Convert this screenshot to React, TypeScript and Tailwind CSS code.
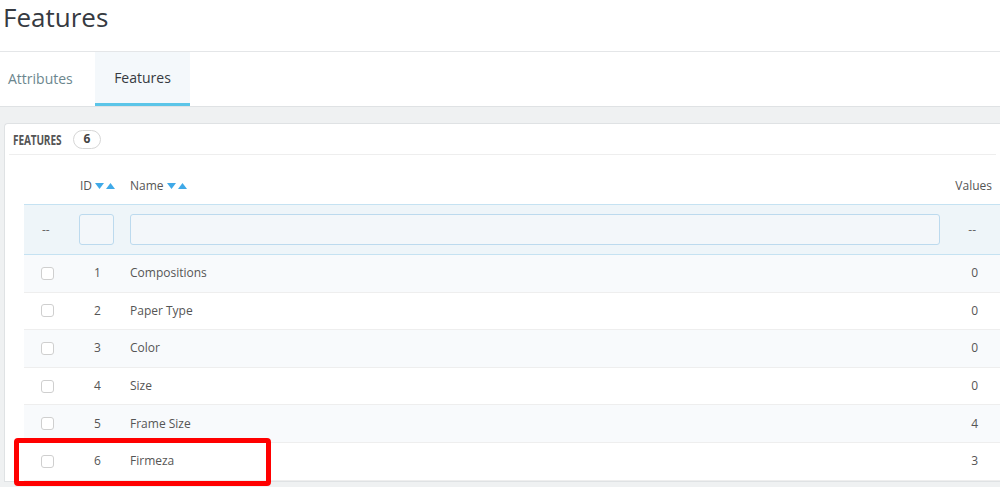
import React from "react";

const rows = [
  { id: 1, name: "Compositions", values: 0 },
  { id: 2, name: "Paper Type", values: 0 },
  { id: 3, name: "Color", values: 0 },
  { id: 4, name: "Size", values: 0 },
  { id: 5, name: "Frame Size", values: 4 },
  { id: 6, name: "Firmeza", values: 3 },
];

function SortArrows() {
  return (
    <span className="ml-[3px] inline-flex items-center gap-[2px]">
      <svg width="9" height="6" viewBox="0 0 9 6">
        <path d="M0 0h9L4.5 6z" fill="#3fa9e8" />
      </svg>
      <svg width="9" height="6" viewBox="0 0 9 6">
        <path d="M0 6h9L4.5 0z" fill="#3fa9e8" />
      </svg>
    </span>
  );
}

export default function App() {
  return (
    <div
      className="h-[487px] w-[1000px] overflow-hidden bg-[#eff1f2] text-[#555]"
      style={{ fontFamily: '"Open Sans", sans-serif' }}
    >
      {/* Page title */}
      <div className="h-[52px] border-b border-[#e4e6e8] bg-white pl-[3px]">
        <h1 className="pt-[1px] text-[26px] leading-[32px] text-[#363a41]">Features</h1>
      </div>

      {/* Tabs */}
      <div className="flex h-[55px] border-b border-[#dfe2e4] bg-white">
        <div className="flex w-[95px] items-center pb-[2px] pl-[8px] text-[14px] text-[#6c868e]">
          Attributes
        </div>
        <div className="flex w-[95px] items-center justify-center border-b-[3px] border-[#5bc5e8] bg-[#f4f8fb] text-[14px] text-[#363a41]">
          Features
        </div>
      </div>

      {/* Panel */}
      <div className="ml-[4px] mt-[16px] rounded-tl-[4px] border border-r-0 border-[#dfe2e4] bg-white">
        <div className="mx-[4px] flex h-[31px] items-center border-b border-[#eeeeee] pl-[4px]">
          <span className="inline-block w-[52px] overflow-visible whitespace-nowrap">
            <span className="inline-block origin-left scale-x-[0.72] text-[14px] font-bold tracking-[-0.2px] text-[#555]">
              FEATURES
            </span>
          </span>
          <span className="ml-[8px] flex h-[19px] w-[28px] items-center justify-center rounded-full border border-[#d6d6d6] text-[12px] font-bold text-[#444]">
            6
          </span>
        </div>

        <div className="pl-[19px]">
          {/* Header */}
          <div className="flex h-[49px] items-end pb-[9px] text-[12px] text-[#555]">
            <div className="w-[56px] shrink-0" />
            <div className="flex w-[50px] shrink-0 items-center">
              ID
              <SortArrows />
            </div>
            <div className="flex flex-1 items-center">
              Name
              <SortArrows />
            </div>
            <div className="w-[72px] shrink-0 pr-[8px] text-right">Values</div>
          </div>

          {/* Filters */}
          <div className="flex h-[51px] items-center border-y border-[#c5e2f2] bg-[#eef5f9] text-[12px]">
            <div className="w-[55px] shrink-0 pl-[18px] text-[#666]">--</div>
            <div className="w-[51px] shrink-0">
              <div className="h-[31px] w-[35px] rounded-[3px] border border-[#bcdaee] bg-[#f3f7fa]" />
            </div>
            <div className="min-w-0 flex-1">
              <div className="h-[31px] w-[810px] rounded-[3px] border border-[#bcdaee] bg-[#f3f7fa]" />
            </div>
            <div className="w-[72px] shrink-0 pr-[24px] text-right text-[#666]">--</div>
          </div>

          {/* Rows */}
          {rows.map((r, i) => (
            <div
              key={r.id}
              className={
                "relative flex h-[37.6px] items-center border-b border-[#eeeeee] text-[12px] " +
                (i % 2 === 0 ? "bg-[#f8fafc]" : "bg-white")
              }
            >
              <div className="w-[55px] shrink-0 pl-[17px]">
                <div className="h-[13px] w-[13px] rounded-[3px] border border-[#cfcfcf] bg-white" />
              </div>
              <div className="w-[51px] shrink-0 pl-[15px] text-[#555]">{r.id}</div>
              <div className="flex-1 text-[#555]">{r.name}</div>
              <div className="w-[72px] shrink-0 pr-[22px] text-right text-[#555]">{r.values}</div>
              {r.id === 6 && (
                <div className="absolute left-[-10px] top-[-5px] h-[48px] w-[257px] rounded-[4px] border-[5px] border-[#ff0000]" />
              )}
            </div>
          ))}
        </div>
      </div>
    </div>
  );
}
